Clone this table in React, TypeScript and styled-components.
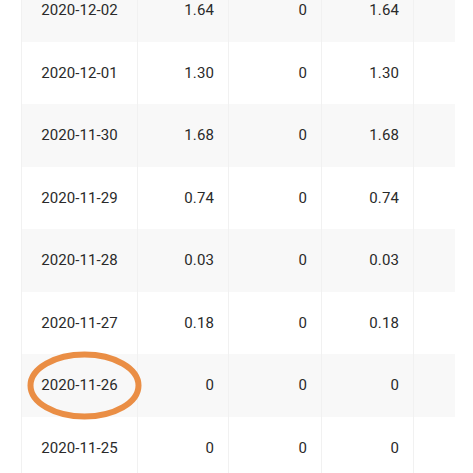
import React from "react";
import styled, { createGlobalStyle } from "styled-components";

const Global = createGlobalStyle`
  html, body { margin: 0; padding: 0; background: #ffffff; overflow: hidden; }
  body { font-family: Roboto, "Noto Sans", Arial, sans-serif; }
`;

const Page = styled.div`
  position: relative;
  width: 473px;
  height: 473px;
  overflow: hidden;
  padding-left: 21px;
  box-sizing: border-box;
`;

const Table = styled.div`
  margin-top: -21px;
  width: 434px;
  display: flex;
  flex-direction: column;
`;

const Row = styled.div<{ $striped: boolean }>`
  display: grid;
  grid-template-columns: 116px 91px 93px 92px 42px;
  height: 62.5px;
  background: ${(p) => (p.$striped ? "#f8f8f8" : "#ffffff")};
`;

const Cell = styled.div<{ $align: "center" | "right" }>`
  display: flex;
  align-items: center;
  justify-content: ${(p) => (p.$align === "center" ? "center" : "flex-end")};
  padding: 0 14px;
  border-left: 1px solid #f1f1f1;
  font-size: 15px;
  color: #2a2a2a;
  letter-spacing: 0.1px;
`;

const Mark = styled.svg`
  position: absolute;
  left: 26px;
  top: 350px;
  width: 120px;
  height: 72px;
  overflow: visible;
`;

const rows = [
  ["2020-12-02", "1.64", "0", "1.64"],
  ["2020-12-01", "1.30", "0", "1.30"],
  ["2020-11-30", "1.68", "0", "1.68"],
  ["2020-11-29", "0.74", "0", "0.74"],
  ["2020-11-28", "0.03", "0", "0.03"],
  ["2020-11-27", "0.18", "0", "0.18"],
  ["2020-11-26", "0", "0", "0"],
  ["2020-11-25", "0", "0", "0"],
];

export default function App() {
  return (
    <Page>
      <Global />
      <Table>
        {rows.map((r, i) => (
          <Row key={r[0]} $striped={i % 2 === 0}>
            <Cell $align="center">{r[0]}</Cell>
            <Cell $align="right">{r[1]}</Cell>
            <Cell $align="right">{r[2]}</Cell>
            <Cell $align="right">{r[3]}</Cell>
            <Cell $align="right" />
          </Row>
        ))}
      </Table>
      <Mark viewBox="0 0 120 72">
        <ellipse cx="58.5" cy="35.5" rx="54" ry="31" fill="none" stroke="#ea8e45" strokeWidth="6" />
      </Mark>
    </Page>
  );
}
